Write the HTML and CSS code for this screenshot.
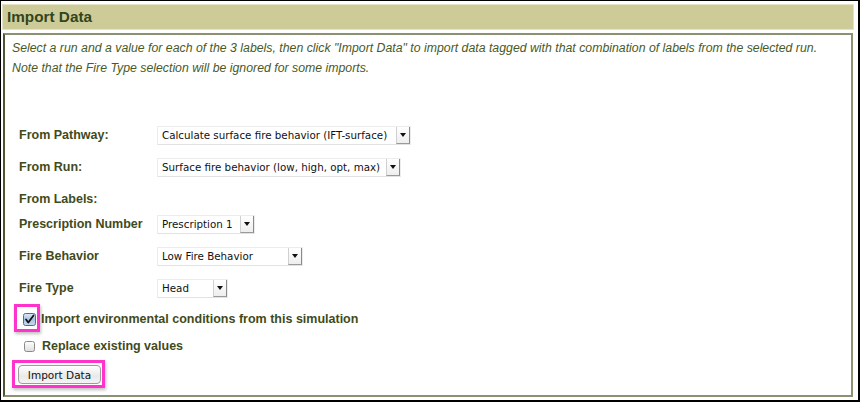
FILE: index.html
```html
<!DOCTYPE html>
<html>
<head>
<meta charset="utf-8">
<link rel="stylesheet" href="styles.css">
</head>
<body>
<div class="frame">
  <div class="title">Import Data</div>
  <div class="panel">
    <p class="intro">Select a run and a value for each of the 3 labels, then click "Import Data" to import data tagged with that combination of labels from the selected run.<br>Note that the Fire Type selection will be ignored for some imports.</p>
    <div class="form">
      <div class="row">
        <span class="label">From Pathway:</span>
        <span class="select w-path"><span class="val">Calculate surface fire behavior (IFT-surface)</span><span class="arrow"><span class="tri"></span></span></span>
      </div>
      <div class="row">
        <span class="label">From Run:</span>
        <span class="select w-run"><span class="val">Surface fire behavior (low, high, opt, max)</span><span class="arrow"><span class="tri"></span></span></span>
      </div>
      <div class="row row-heading">
        <span class="label">From Labels:</span>
      </div>
      <div class="row">
        <span class="label">Prescription Number</span>
        <span class="select w-presc"><span class="val">Prescription 1</span><span class="arrow"><span class="tri"></span></span></span>
      </div>
      <div class="row">
        <span class="label">Fire Behavior</span>
        <span class="select w-fb"><span class="val">Low Fire Behavior</span><span class="arrow"><span class="tri"></span></span></span>
      </div>
      <div class="row">
        <span class="label">Fire Type</span>
        <span class="select w-ft"><span class="val">Head</span><span class="arrow"><span class="tri"></span></span></span>
      </div>
    </div>
    <div class="check-row first">
      <span class="cb checked hl-cb"><svg width="13" height="13" viewBox="0 0 13 13"><defs><linearGradient id="g1" x1="0" y1="0" x2="0" y2="1"><stop offset="0" stop-color="#dfe9f6"/><stop offset="0.5" stop-color="#a9c2e4"/><stop offset="1" stop-color="#c9daf0"/></linearGradient></defs><rect x="0.5" y="0.5" width="12" height="12" rx="2" fill="url(#g1)" stroke="#5a6a86"/><path d="M3 6.5 L5.3 9.5 L10.5 2.5" fill="none" stroke="#111" stroke-width="1.8" stroke-linecap="round" stroke-linejoin="round"/></svg></span>
      <span class="cb-text">Import environmental conditions from this simulation</span>
    </div>
    <div class="check-row second">
      <span class="cb"><svg width="11" height="11" viewBox="0 0 11 11"><defs><linearGradient id="g2" x1="0" y1="0" x2="0" y2="1"><stop offset="0" stop-color="#ffffff"/><stop offset="1" stop-color="#dedede"/></linearGradient></defs><rect x="0.5" y="0.5" width="10" height="10" rx="2" fill="url(#g2)" stroke="#8a8a8a"/></svg></span>
      <span class="cb-text">Replace existing values</span>
    </div>
    <div class="btn-row">
      <span class="btn-wrap"><button class="btn">Import Data</button></span>
    </div>
  </div>
</div>
</body>
</html>
```

FILE: styles.css
```css
html, body {
  margin: 0;
  padding: 0;
  background: #ffffff;
}
.frame {
  width: 860px;
  height: 402px;
  box-sizing: border-box;
  border-top: 1px solid #000;
  border-left: 1px solid #000;
  border-right: 2px solid #000;
  border-bottom: 2px solid #000;
  padding: 4px 5px 3px 2px;
  display: flex;
  flex-direction: column;
  background: #fff;
  font-family: "Liberation Sans", Arial, sans-serif;
}
.title {
  height: 24px;
  line-height: 24px;
  background: #cdcc99;
  color: #33451b;
  font-weight: bold;
  font-size: 15.3px;
  padding-left: 4px;
  box-shadow: 0 0 0 1px #e4e3c6;
}
.panel {
  margin-top: 4px;
  flex: 1;
  border: 2px solid #8b9173;
  border-left-color: #4c5636;
  padding: 3px 7px 0 7px;
  display: flex;
  flex-direction: column;
}
.intro {
  margin: 0;
  font-style: italic;
  font-size: 12.3px;
  line-height: 20px;
  color: #485a26;
}
.form {
  margin-top: 47px;
  padding-left: 7px;
  display: flex;
  flex-direction: column;
  gap: 12px;
}
.row {
  display: flex;
  align-items: center;
  height: 20px;
}
.row-heading {
  margin-bottom: -7px;
}
.label {
  width: 138px;
  font-weight: bold;
  font-size: 12.5px;
  color: #3f4b1c;
}
.select {
  display: flex;
  align-items: center;
  justify-content: space-between;
  height: 19px;
  box-sizing: border-box;
  background: #fff;
  border: 1px solid #ececec;
  border-bottom-color: #e2e2e2;
  font-family: "DejaVu Sans", sans-serif;
  font-size: 10.3px;
  color: #111;
  padding-left: 4px;
}
.val {
  white-space: nowrap;
  overflow: hidden;
  padding-right: 2px;
}
.arrow {
  width: 14px;
  height: 17px;
  box-sizing: border-box;
  border-left: 1px solid #d0d0d0;
  border-right: 1px solid #8a8a8a;
  border-bottom: 1px solid #9a9a9a;
  background: linear-gradient(#ffffff, #eeeeee);
  display: flex;
  align-items: center;
  justify-content: center;
  flex-shrink: 0;
}
.tri {
  width: 0;
  height: 0;
  border-left: 3px solid transparent;
  border-right: 3px solid transparent;
  border-top: 4px solid #111;
}
.w-path { width: 254px; }
.w-run { width: 244px; }
.w-presc { width: 98px; }
.w-fb { width: 146px; }
.w-ft { width: 71px; }

.check-row {
  display: flex;
  align-items: center;
  height: 20px;
}
.check-row.first {
  margin-top: 11px;
  padding-left: 11px;
}
.check-row.second {
  margin-top: 7px;
  padding-left: 12px;
}
.cb {
  display: flex;
  position: relative;
}
.cb svg {
  display: block;
}
.check-row.first .cb-text {
  margin-left: 5px;
}
.check-row.second .cb-text {
  margin-left: 7px;
}
.hl-cb::after {
  content: "";
  position: absolute;
  left: -9px;
  top: -9px;
  width: 20px;
  height: 22px;
  border: 3px solid #ff33cc;
  box-shadow: 1px 2px 3px rgba(0,0,0,0.25);
}
.cb-text {
  font-weight: bold;
  font-size: 12.5px;
  color: #3f4b1c;
}
.btn-row {
  margin-top: 9px;
  padding-left: 6px;
  display: flex;
}
.btn-wrap {
  position: relative;
  display: flex;
}
.btn-wrap::after {
  content: "";
  position: absolute;
  left: -6px;
  top: -5px;
  right: -4px;
  bottom: -4px;
  border: 3px solid #ff33cc;
  box-shadow: 1px 2px 3px rgba(0,0,0,0.25);
  pointer-events: none;
}
.btn {
  width: 83px;
  height: 19px;
  padding: 0;
  margin: 0;
  border: 1px solid #9c9c9c;
  border-radius: 4px;
  background: linear-gradient(#ffffff, #e9e9e9 60%, #f4f4f4);
  font-family: "DejaVu Sans", sans-serif;
  font-size: 10.5px;
  color: #111;
}
```
